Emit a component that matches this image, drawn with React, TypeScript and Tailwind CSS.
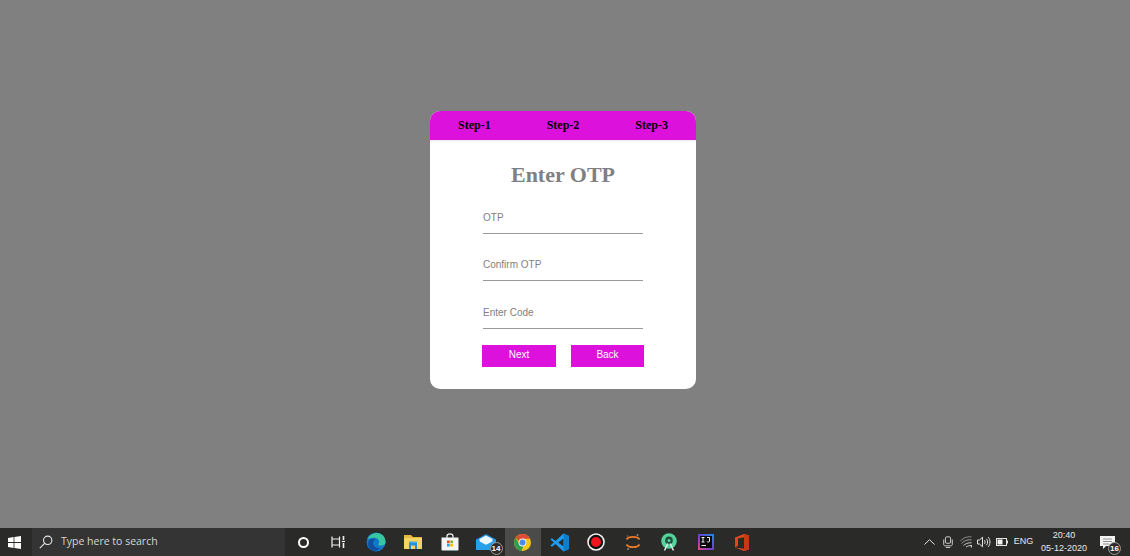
const sans = 'font-["Liberation_Sans",Arial,sans-serif]';

function StartIcon() {
    return (
        <svg width="13" height="13" viewBox="0 0 13 13">
            <path d="M0 2 5.6 1.1V6H0ZM6.4 1 13 0V6H6.4ZM0 6.9H5.6V11.9L0 11ZM6.4 6.9H13V13L6.4 12Z" fill="#fff" />
        </svg>
    );
}

function SearchIcon() {
    return (
        <svg width="14" height="14" viewBox="0 0 14 14" fill="none" stroke="#e8e8e8" strokeWidth="1.1">
            <circle cx="8.7" cy="5.3" r="4.2" />
            <path d="M5.6 8.4.8 13.2" />
        </svg>
    );
}

function TaskViewIcon() {
    return (
        <svg className="mr-[3px]" width="14" height="14" viewBox="0 0 14 14" fill="none" stroke="#f0f0f0" strokeWidth="1.2">
            <path d="M1 1.5V12.5M1 4H8.5M1 10H8.5M8.5 1.5V12.5" />
            <path d="M12.5 1V5M12.5 8V13" strokeWidth="1.6" />
            <path d="M10.8 6.5H14" />
        </svg>
    );
}

function EdgeIcon() {
    return (
        <svg width="20" height="20" viewBox="0 0 20 20">
            <circle cx="10" cy="10" r="9.5" fill="#1279c9" />
            <path d="M1.5 7C4 1 12-1 16.5 3 19 5.2 20 8.5 19.4 11.5 18.5 13.6 14.5 14 12 13 14 11 13.5 7 10 6 6.5 5.2 3 6.5 1.5 7Z" fill="#37c6a0" />
            <path d="M7 11C7 14.5 10.5 16.5 14 16 12 18.5 8.5 19.8 5.5 18 2.5 16 1.2 11 3 8.5 4.5 6.8 7.6 6.4 9.5 7.2 8 8 7 9.5 7 11Z" fill="#0f4f9e" />
        </svg>
    );
}

function FolderIcon() {
    return (
        <svg width="18" height="16" viewBox="0 0 18 16">
            <path d="M0 1H7L9 3H18V15H0Z" fill="#e8b93f" />
            <path d="M0 4H18V15H0Z" fill="#f5d365" />
            <path d="M5 9H13V15H11V11.5H7V15H5Z" fill="#2b8fd8" />
            <path d="M5 7.5H13V9H5Z" fill="#4aa7e6" />
        </svg>
    );
}

function StoreIcon() {
    return (
        <svg width="18" height="18" viewBox="0 0 18 18">
            <path d="M6 5V3.2C6 1.8 7.2.8 9 .8S12 1.8 12 3.2V5" fill="none" stroke="#f2f2f2" strokeWidth="1.2" />
            <path d="M.5 4.5H17.5V16.5C17.5 17.2 17 17.6 16.4 17.6H1.6C1 17.6.5 17.2.5 16.5Z" fill="#f4f4f4" />
            <rect x="6" y="7.5" width="2.7" height="2.7" fill="#e8512c" />
            <rect x="9.3" y="7.5" width="2.7" height="2.7" fill="#7fba2a" />
            <rect x="6" y="10.8" width="2.7" height="2.7" fill="#1ea4e8" />
            <rect x="9.3" y="10.8" width="2.7" height="2.7" fill="#fcb714" />
        </svg>
    );
}

function Badge({ value, className }: { value: number; className: string }) {
    return (
        <span
            className={`absolute flex h-[13px] w-[13px] items-center justify-center rounded-full border border-[#9a9a9a] bg-[#2b2b2b] text-[8px] font-bold text-white ${sans} ${className}`}
        >
            {value}
        </span>
    );
}

function MailIcon() {
    return (
        <svg width="20" height="16" viewBox="0 0 20 16">
            <path d="M0 5.5 10 0 20 5.5V16H0Z" fill="#1d93e0" />
            <path d="M3.5 5 10 1.5 16.5 5V8L10 11 3.5 8Z" fill="#ecf6fd" />
            <path d="M0 5.5 10 11 20 5.5V16H0Z" fill="#27a0ea" />
        </svg>
    );
}

function ChromeIcon() {
    return (
        <svg width="17" height="17" viewBox="0 0 17 17">
            <circle cx="8.5" cy="8.5" r="8.5" fill="#f5c518" />
            <path d="M8.5 0A8.5 8.5 0 0 1 16.1 4.8H8.5A3.7 3.7 0 0 0 4.9 7.6L1.6 3.6A8.5 8.5 0 0 1 8.5 0Z" fill="#e04a3b" />
            <path d="M1.6 3.6 5.4 10.4A3.7 3.7 0 0 0 9.6 12L7.3 16.9A8.5 8.5 0 0 1 1.6 3.6Z" fill="#2f9e4f" />
            <circle cx="8.5" cy="8.5" r="3.9" fill="#f2f2f2" />
            <circle cx="8.5" cy="8.5" r="3" fill="#4a8af4" />
        </svg>
    );
}

function VsCodeIcon() {
    return (
        <svg width="19" height="19" viewBox="0 0 19 19">
            <path d="M13.5.5 19 3V16L13.5 18.5 5.5 11 2 13.8.3 12.8 3.8 9.5.3 6.2 2 5.2 5.5 8ZM13.5 5.4 8.2 9.5 13.5 13.6Z" fill="#1f9cf0" />
            <path d="M13.5.5 19 3V16L13.5 18.5V13.6 5.4Z" fill="#0f7fcc" />
        </svg>
    );
}

function RecordIcon() {
    return (
        <svg width="18" height="18" viewBox="0 0 18 18">
            <circle cx="9" cy="9" r="8" fill="#111" stroke="#f2f2f2" strokeWidth="1.6" />
            <circle cx="9" cy="9" r="5" fill="#f0141e" />
        </svg>
    );
}

function JupyterIcon() {
    return (
        <svg width="16" height="18" viewBox="0 0 16 18" fill="none">
            <path d="M1.5 6.5C3.5 3 12.5 3 14.5 6.5" stroke="#ef7a26" strokeWidth="1.8" />
            <path d="M1.5 11.5C3.5 15 12.5 15 14.5 11.5" stroke="#ef7a26" strokeWidth="1.8" />
            <circle cx="12.5" cy="2" r="1" fill="#8a8a8a" />
            <circle cx="3" cy="16" r="1" fill="#8a8a8a" />
            <circle cx="2.5" cy="3" r=".7" fill="#777" />
        </svg>
    );
}

function AndroidStudioIcon() {
    return (
        <svg width="18" height="19" viewBox="0 0 18 19">
            <circle cx="9" cy="8" r="7.8" fill="#54d49a" />
            <circle cx="9" cy="7.4" r="3.8" fill="#1f4d3f" />
            <circle cx="9" cy="7.4" r="1.5" fill="#54d49a" />
            <path d="M7.8 10.5 4.5 17.5M10.2 10.5 13.5 17.5" stroke="#e8e8e8" strokeWidth="1.5" />
        </svg>
    );
}

function IntellijIcon() {
    return (
        <svg width="16" height="16" viewBox="0 0 16 16">
            <defs>
                <linearGradient id="ij" x1="0" y1="1" x2="1" y2="0">
                    <stop offset="0" stopColor="#f0447c" />
                    <stop offset=".5" stopColor="#6b3fd4" />
                    <stop offset="1" stopColor="#1d8fe0" />
                </linearGradient>
            </defs>
            <rect width="16" height="16" fill="url(#ij)" />
            <rect x="2" y="2" width="12" height="12" fill="#0c0c0c" />
            <path d="M3.5 3.5H6.5M5 3.5V8M3.5 8H6.5M9 3.5H11.5V7C11.5 8.3 9.8 8.4 8.8 7.4" fill="none" stroke="#f2f2f2" strokeWidth="1" />
            <path d="M3.5 11.5H8" stroke="#f2f2f2" strokeWidth="1" />
        </svg>
    );
}

function OfficeIcon() {
    return (
        <svg width="14" height="17" viewBox="0 0 14 17">
            <path d="M0 3.4 9 0 14 1.5V15.5L9 17 0 13.6 9 14.8V3.2L3 4.6V11.8L0 13.6Z" fill="#e5461f" />
            <path d="M9 0 14 1.5V15.5L9 17Z" fill="#c7371a" />
        </svg>
    );
}

function MeetIcon() {
    return (
        <svg width="10" height="12" viewBox="0 0 11 14" fill="none" stroke="#e6e6e6" strokeWidth="1">
            <rect x="2.5" y="1" width="6" height="7.5" rx="1.5" />
            <path d="M.5 4V10C.5 11 1.5 11.5 2.5 11.5H8.5C9.5 11.5 10.5 11 10.5 10V4M3 13.5H8" />
        </svg>
    );
}

function WifiIcon() {
    return (
        <svg width="12" height="12" viewBox="0 0 12 12" fill="none" stroke="#c8c8c8" strokeWidth="1">
            <path d="M.5 5C2.5 2 7 .3 11.5 .8" strokeOpacity=".6" />
            <path d="M1.5 7.5C3.5 5 7 3.5 11.5 3.8" strokeOpacity=".7" />
            <path d="M3.5 9.5C5 8 8 6.5 11.5 6.8" />
            <path d="M6 11C7.5 10 9.5 9.5 11.5 9.5" />
            <path d="M11.5 9V11.5" strokeWidth="1.4" />
        </svg>
    );
}

function VolumeIcon() {
    return (
        <svg width="14" height="12" viewBox="0 0 14 12" fill="none" stroke="#e6e6e6" strokeWidth="1">
            <path d="M.5 4H2.5L5.5 1.2V10.8L2.5 8H.5Z" />
            <path d="M7.5 4.2C8.3 5.2 8.3 6.8 7.5 7.8M9.5 2.8C11 4.5 11 7.5 9.5 9.2M11.3 1.2C13.5 3.8 13.5 8.2 11.3 10.8" />
        </svg>
    );
}

function BatteryIcon() {
    return (
        <svg width="12" height="8" viewBox="0 0 12 8">
            <rect x=".5" y=".5" width="10" height="7" fill="none" stroke="#e6e6e6" />
            <rect x="1.5" y="1.5" width="5" height="5" fill="#f2f2f2" />
            <rect x="11" y="2.5" width="1" height="3" fill="#e6e6e6" />
        </svg>
    );
}

function NotificationIcon() {
    return (
        <svg width="15" height="13" viewBox="0 0 15 13">
            <path d="M0 0H15V10H6L3 13V10H0Z" fill="#f2f2f2" />
            <path d="M3 3H12M3 5.5H12M3 8H9" stroke="#7a7a7a" strokeWidth=".8" />
        </svg>
    );
}

const apps = [
    { key: 'cortana', icon: <span className="h-[11px] w-[11px] rounded-full border-2 border-white" /> },
    { key: 'taskview', icon: <TaskViewIcon /> },
    { key: 'edge', icon: <EdgeIcon /> },
    { key: 'folder', icon: <FolderIcon /> },
    { key: 'store', icon: <StoreIcon /> },
    { key: 'mail', icon: <MailIcon />, badge: 14 },
    { key: 'chrome', icon: <ChromeIcon />, active: true },
    { key: 'vscode', icon: <VsCodeIcon /> },
    { key: 'record', icon: <RecordIcon /> },
    { key: 'jupyter', icon: <JupyterIcon /> },
    { key: 'studio', icon: <AndroidStudioIcon /> },
    { key: 'intellij', icon: <IntellijIcon /> },
    { key: 'office', icon: <OfficeIcon /> },
];

const tray = [
    { key: 'meet', width: 'w-[18px]', icon: <MeetIcon /> },
    { key: 'wifi', width: 'w-[18px]', icon: <WifiIcon /> },
    { key: 'volume', width: 'w-[17px]', icon: <VolumeIcon /> },
    { key: 'battery', width: 'w-[19px]', icon: <BatteryIcon /> },
];

function Taskbar() {
    return (
        <div className="flex h-7 shrink-0 items-stretch bg-[#2a2a28]">
            <div className="flex w-8 items-center justify-center pr-1">
                <StartIcon />
            </div>
            <div className="flex w-[253px] items-center gap-2 bg-[#343434] pl-[7px]">
                <SearchIcon />
                <span className="font-['Open_Sans',sans-serif] text-[10.5px] text-[#d6d6d6]">Type here to search</span>
            </div>
            <div className="flex">
                {apps.map((app) => (
                    <div
                        key={app.key}
                        className={`relative flex w-[36.6px] items-center justify-center ${app.active ? 'bg-[#4b4b4a]' : ''}`}
                    >
                        {app.icon}
                        {app.badge ? <Badge value={app.badge} className="right-[2px] bottom-[1px]" /> : null}
                    </div>
                ))}
            </div>
            <div className={`ml-auto flex items-center pr-[5px] text-[#e8e8e8] ${sans}`}>
                <svg className="mr-[4px]" width="11" height="6" viewBox="0 0 11 6" fill="none" stroke="#e6e6e6" strokeWidth="1">
                    <path d="M.5 5.5 5.5.7 10.5 5.5" />
                </svg>
                {tray.map((item) => (
                    <div key={item.key} className={`flex items-center justify-center ${item.width}`}>
                        {item.icon}
                    </div>
                ))}
                <span className="flex w-[25px] justify-center text-[9px]">ENG</span>
                <div className="flex w-[56px] flex-col items-center text-[9px] leading-[13px]">
                    <span>20:40</span>
                    <span>05-12-2020</span>
                </div>
                <div className="relative flex h-7 w-[33px] items-center justify-center pr-[2px]">
                    <NotificationIcon />
                    <Badge value={16} className="right-[4px] bottom-[1px]" />
                </div>
            </div>
        </div>
    );
}

function Field({ placeholder }: { placeholder: string }) {
    return (
        <input
            type="text"
            placeholder={placeholder}
            className={`block h-[30px] w-40 border-b border-[#9a9a9a] bg-transparent pb-[2px] text-[10px] outline-none placeholder:text-[#7f7f7f] ${sans}`}
        />
    );
}

export default function App() {
    return (
        <div className="flex h-[556px] flex-col overflow-hidden bg-[#808080]">
            <div className="flex-1 pt-[111px] pl-[430px]">
                <div className="h-[278px] w-[266px] overflow-hidden rounded-[10px] bg-white">
                    <div className="grid h-[29px] grid-cols-3 items-center bg-[#dc12dc] pb-px font-['Liberation_Serif',serif] text-[12px] font-bold text-black shadow-[0_1px_2px_rgba(0,0,0,0.1)]">
                        <span className="text-center">Step-1</span>
                        <span className="text-center">Step-2</span>
                        <span className="text-center">Step-3</span>
                    </div>
                    <h1 className="mt-5 text-center font-['Liberation_Serif',serif] text-[22px] leading-[30px] font-bold text-[#808080]">
                        Enter OTP
                    </h1>
                    <div className="mt-[14px] ml-[53px] flex flex-col gap-[17.4px]">
                        <Field placeholder="OTP" />
                        <Field placeholder="Confirm OTP" />
                        <Field placeholder="Enter Code" />
                    </div>
                    <div className={`mt-4 ml-[52px] flex gap-[15px] text-[10px] text-white ${sans}`}>
                        <button className="h-[22px] w-[74px] bg-[#dc12dc] pb-[2px]">Next</button>
                        <button className="h-[22px] w-[73px] bg-[#dc12dc] pb-[2px]">Back</button>
                    </div>
                </div>
            </div>
            <Taskbar />
        </div>
    );
}
